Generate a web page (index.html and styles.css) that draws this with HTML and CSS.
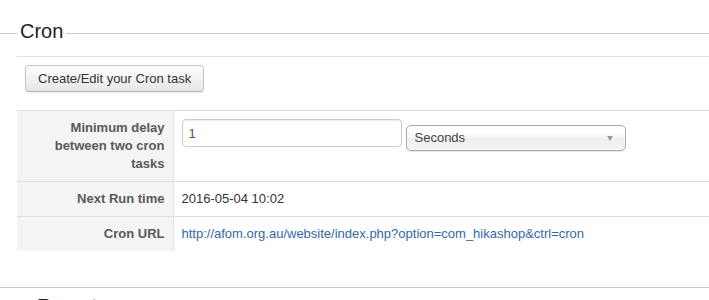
FILE: index.html
```html
<!DOCTYPE html>
<html lang="en">
	<head>
		<meta charset="UTF-8" />
		<title>Cron</title>
		<link rel="stylesheet" href="styles.css">
	</head>
	<body>
		<fieldset class="adminform">
			<legend>Cron</legend>
			<div class="toolbar">
				<button class="btn" type="button">Create/Edit your Cron task</button>
			</div>
			<table class="admintable">
				<tr>
					<td class="key">Minimum delay between two cron tasks</td>
					<td>
						<div class="delay">
							<input class="inputbox" type="text" value="1">
							<div class="chzn-single">
								<span>Seconds</span>
								<span class="chzn-arrow"></span>
							</div>
						</div>
					</td>
				</tr>
				<tr>
					<td class="key">Next Run time</td>
					<td>2016-05-04 10:02</td>
				</tr>
				<tr>
					<td class="key">Cron URL</td>
					<td><a href="#">http://afom.org.au/website/index.php?option=com_hikashop&amp;ctrl=cron</a></td>
				</tr>
			</table>
		</fieldset>

		<fieldset class="adminform report">
			<legend>Report</legend>
		</fieldset>
	</body>
</html>
```

FILE: styles.css
```css
* {
	box-sizing: border-box;
}

body {
	margin: 0;
	font-family: "Liberation Sans", Arial, sans-serif;
	font-size: 13px;
	line-height: 18px;
	color: #333;
	background: #fff;
}

.adminform {
	margin: 19px 0 0;
	padding: 0 0 36px 17px;
	border: 0;
	border-top: 1px solid #cccccc;
	border-bottom: 1px solid #cccccc;
	min-width: 0;
}

.adminform legend {
	padding: 0 3px 4px;
	font-size: 20px;
	line-height: 24px;
	color: #222;
}

.report {
	margin-top: 6px;
	padding-left: 34px;
	border-bottom: 0;
}

.toolbar {
	margin-top: 9px;
	padding: 8px 8px 18px;
	border-top: 1px solid #e3e3e3;
}

.btn {
	display: inline-block;
	height: 27px;
	padding: 0 12px;
	font-family: inherit;
	font-size: 13px;
	line-height: 18px;
	color: #333;
	background: linear-gradient(#ffffff, #e6e6e6);
	border: 1px solid #c4c4c4;
	border-bottom-color: #b3b3b3;
	border-radius: 4px;
	box-shadow: inset 0 1px 0 rgba(255, 255, 255, 0.2), 0 1px 2px rgba(0, 0, 0, 0.08);
}

.admintable {
	width: 100%;
	border-collapse: collapse;
	border-spacing: 0;
}

.admintable td {
	padding: 8px;
	border-top: 1px solid #dddddd;
	vertical-align: top;
	text-align: left;
}

.admintable td.key {
	width: 156px;
	text-align: right;
	font-weight: bold;
	color: #595959;
	background: #f4f4f4;
	border-right: 1px solid #e2e2e2;
}

.admintable a {
	color: #3568a8;
	text-decoration: none;
}

.delay {
	display: flex;
	align-items: flex-start;
	gap: 4px;
}

.inputbox {
	width: 220px;
	height: 28px;
	padding: 4px 6px;
	font-family: inherit;
	font-size: 13px;
	line-height: 18px;
	color: #555;
	border: 1px solid #cccccc;
	border-radius: 4px;
	box-shadow: inset 0 1px 1px rgba(0, 0, 0, 0.075);
}

.chzn-single {
	display: flex;
	align-items: center;
	justify-content: space-between;
	width: 220px;
	height: 26px;
	margin-top: 6px;
	padding: 0 12px 0 8px;
	color: #444;
	background: linear-gradient(#ffffff 20%, #f6f6f6 50%, #eeeeee 52%, #f4f4f4 100%);
	border: 1px solid #aaaaaa;
	border-radius: 5px;
	box-shadow: inset 0 0 3px #fff, 0 1px 1px rgba(0, 0, 0, 0.1);
}

.chzn-arrow {
	width: 0;
	height: 0;
	border-left: 3px solid transparent;
	border-right: 3px solid transparent;
	border-top: 5px solid #999;
}
```
